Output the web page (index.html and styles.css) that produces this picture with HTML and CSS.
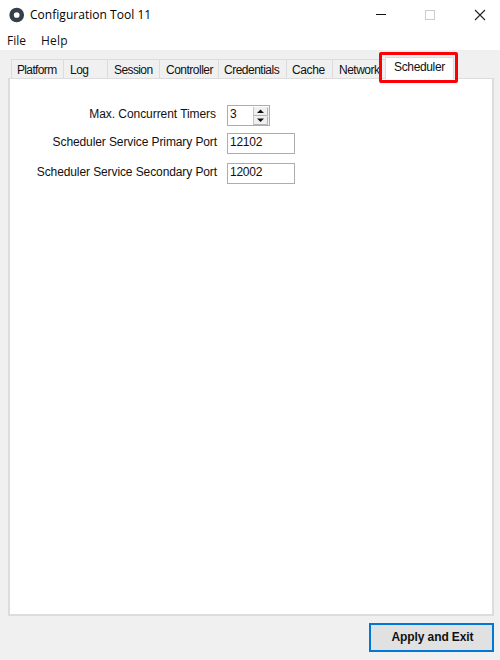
FILE: index.html
```html
<!DOCTYPE html>
<html lang="en">
<head>
<meta charset="utf-8">
<title>Configuration Tool 11</title>
<link rel="stylesheet" href="styles.css">
</head>
<body>
<div class="window">
  <header class="titlebar">
    <svg class="logo" width="16" height="16" viewBox="0 0 16 16"><circle cx="7.700" cy="8" r="5.100" fill="none" stroke="#354146" stroke-width="4.500"/></svg>
    <span class="title">Configuration Tool 11</span>
    <svg class="controls" width="112" height="14" viewBox="0 0 112 14" fill="none">
      <path d="M1 6.500h10" stroke="#111"/>
      <rect x="50.500" y="2.500" width="9" height="9" stroke="#ccc"/>
      <path d="M100 2l10 10M110 2l-10 10" stroke="#222" stroke-width="1.100"/>
    </svg>
  </header>
  <nav class="menu"><span class="file">File</span><span class="help">Help</span></nav>
  <main class="body">
    <div class="tabs">
      <div class="tab platform"><span>Platform</span></div>
      <div class="tab log"><span>Log</span></div>
      <div class="tab session"><span>Session</span></div>
      <div class="tab controller"><span>Controller</span></div>
      <div class="tab credentials"><span>Credentials</span></div>
      <div class="tab cache"><span>Cache</span></div>
      <div class="tab network"><span>Network</span></div>
      <div class="tab scheduler"><span>Scheduler</span><i class="highlight"></i></div>
    </div>
    <section class="panel">
      <div class="row timers"><label><span>Max. Concurrent Timers</span></label>
        <div class="field spinner"><span>3</span>
          <svg width="16" height="18" viewBox="0 0 16 18"><path d="M0 0h16v18H0z" fill="#f0f0f0"/><path d="M.5 8.500h14V.5M.5 17.500h14V9.500" fill="none" stroke="#b4b4b4"/><path d="M.5 0v18" stroke="#c4c4c4"/><path d="M4 6h7L7.500 2.500zM4 11.500h7L7.500 15z" fill="#111"/></svg>
        </div>
      </div>
      <div class="row primary"><label><span>Scheduler Service Primary Port</span></label><div class="field"><span>12102</span></div></div>
      <div class="row secondary"><label><span>Scheduler Service Secondary Port</span></label><div class="field"><span>12002</span></div></div>
    </section>
    <footer><button><span>Apply and Exit</span></button></footer>
  </main>
</div>
</body>
</html>
```
FILE: styles.css
```css
* { box-sizing: border-box; }
body { margin: 0; background: #f0f0f0; color: #111; font: 12px/14px "Liberation Sans", Arial, sans-serif; }
.window { width: 500px; height: 660px; display: flex; flex-direction: column; overflow: hidden; }
.titlebar { height: 30px; background: #fff; display: flex; align-items: center; padding: 0 13px 0 9px; font: 12px/18px "Open Sans", sans-serif; color: #000; }
.title { margin-left: 5px; letter-spacing: 0.03px; white-space: nowrap; }
.logo { margin-top: -1px; }
.controls { margin-left: auto; }
.menu { height: 20px; background: #fff; display: flex; gap: 15px; padding: 2px 0 0 7px; font: 12px/18px "Open Sans", sans-serif; }
.help { letter-spacing: 0.2px; }
.body { flex: 1; padding: 5px 6px 0 8px; }
.tabs { height: 23px; display: flex; align-items: flex-end; padding-left: 3px; }
.tab { height: 19px; border: 1px solid #dcdcdc; border-width: 1px 0 0 1px; padding: 3px 0 0 5px; white-space: nowrap; }
.platform { width: 52px; letter-spacing: -0.65px; }
.log { width: 44px; padding-left: 6px; letter-spacing: -0.5px; }
.session { width: 52px; padding-left: 6px; letter-spacing: -0.6px; }
.controller { width: 59px; padding-left: 6px; letter-spacing: -0.5px; }
.credentials { width: 68px; letter-spacing: -0.5px; }
.cache { width: 46px; letter-spacing: -0.4px; }
.network { width: 53px; padding-left: 6px; letter-spacing: -0.5px; }
.scheduler { position: relative; width: 69px; height: 22px; margin-bottom: -1px; background: #fff; border-right-width: 1px; padding: 2px 0 0 8px; letter-spacing: -0.35px; }
.highlight { position: absolute; left: -7px; top: -6px; width: 79px; height: 31px; border: 3px solid #fb0007; border-radius: 2px; }
.panel { height: 538px; background: #fff; border: 1px solid #dcdcdc; border-width: 1px 2px 2px; padding-top: 26px; }
.row { display: flex; height: 21px; }
.timers { margin-bottom: 7px; }
.primary { margin-bottom: 9px; }
label { width: 207px; padding-top: 2px; margin-right: 10px; text-align: right; white-space: nowrap; letter-spacing: -0.1px; }
.timers label { width: 206px; margin-right: 11px; letter-spacing: -0.06px; }
.field { width: 68px; height: 21px; border: 1px solid #abadb3; padding: 1px 0 0 2px; background: #fff; letter-spacing: -0.25px; }
.spinner { width: 43px; display: flex; justify-content: space-between; padding-right: 0; }
footer { display: flex; justify-content: flex-end; padding-top: 7px; }
button { width: 125px; height: 29px; padding: 0 0 1px 2px; border: 2px solid #0078d7; background: #e1e1e1; color: #111; font: bold 12px/14px "Liberation Sans", Arial, sans-serif; letter-spacing: -0.1px; white-space: nowrap; }
```
